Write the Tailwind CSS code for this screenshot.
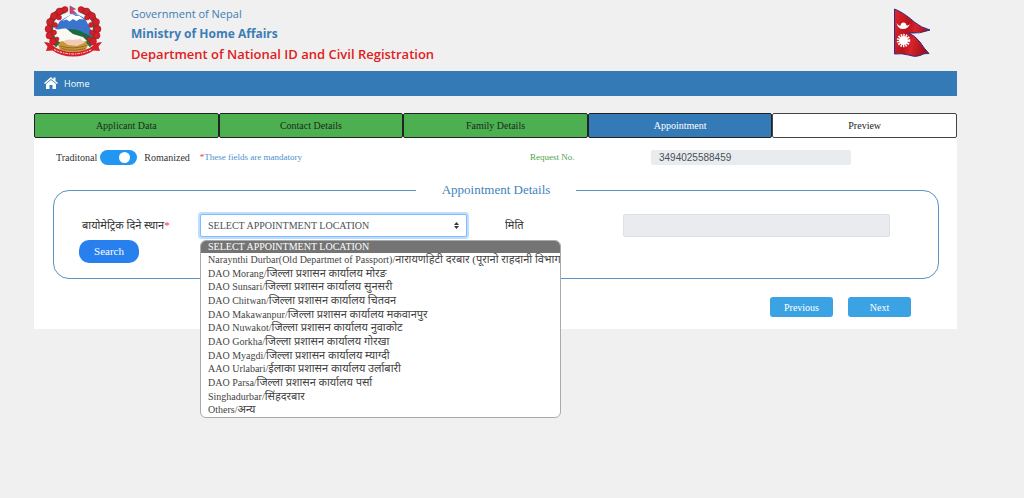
<!DOCTYPE html>
<html lang="en">
<head>
  <meta charset="UTF-8" />
  <title>Appointment Details</title>
  <meta name="viewport" content="width=device-width, initial-scale=1.0" />
  <script src="https://cdn.jsdelivr.net/npm/@tailwindcss/browser@4"></script>
</head>
<body class="bg-[#f0f0f0] text-[#333] min-h-screen font-['Liberation_Serif','Noto_Sans_Devanagari','Noto_Sans',serif] text-[10px]">

  <div class="ml-[34px] mr-[67px]">
    <header class="flex items-start pt-1 h-[71px]">
      <svg class="w-[60px] h-[54px] ml-[9px] shrink-0" viewBox="0 0 120 108" role="img" aria-label="Emblem of Nepal">
        <ellipse cx="60" cy="54" rx="39" ry="38" fill="#f4f6f8" />
        <path d="M24 50 34 34l10-6 14-8 12 1 14 8 12 23 2 14-24-4-18-8-18-2z" fill="#3a74cc" />
        <path d="m38 34 8-6 12-8 8 4 6-1 10 8-9-1-6 4-7-4-7 5-6-4z" fill="#fff" />
        <path d="M52 50q18 0 30 8l14 6q-2 10-10 16l-20-8-18-10z" fill="#1c6b3c" />
        <path d="M24 56q8-8 22-7l14 11 20 6 8 8-20 8-26-2q-14-6-18-24z" fill="#fbf9f3" />
        <path d="M28 77q17-5 32-1 16-3 32 0l-6 16q-25 8-52 0z" fill="#c9973a" />
        <path d="M40 75q9-6 19-3l16-2 9 7-16 7-18-2z" fill="#f1cbb6" />
        <path d="M34 84q26 8 53-1M37 89q23 7 47 0" fill="none" stroke="#946a27" stroke-width="2" />
        <path d="M44 12C8 20 6 62 30 82M76 12c36 8 38 50 14 70" fill="none" stroke="#2f6d38" stroke-width="12" />
        <g fill="#d31f2c" stroke="#a5141f" stroke-width="1">
          <circle cx="44" cy="11" r="6" /><circle cx="33" cy="15" r="7" /><circle cx="22" cy="24" r="7" />
          <circle cx="14" cy="36" r="7" /><circle cx="11" cy="50" r="7" /><circle cx="13" cy="63" r="7" />
          <circle cx="20" cy="75" r="7" /><circle cx="32" cy="27" r="5" /><circle cx="24" cy="42" r="5" />
          <circle cx="22" cy="57" r="5" /><circle cx="28" cy="70" r="4" />
          <circle cx="76" cy="11" r="6" /><circle cx="87" cy="15" r="7" /><circle cx="98" cy="24" r="7" />
          <circle cx="106" cy="36" r="7" /><circle cx="109" cy="50" r="7" /><circle cx="107" cy="63" r="7" />
          <circle cx="100" cy="75" r="7" /><circle cx="88" cy="27" r="5" /><circle cx="96" cy="42" r="5" />
          <circle cx="98" cy="57" r="5" /><circle cx="92" cy="70" r="4" />
        </g>
        <path d="M2 76q9 0 14 4 17 16 44 16t44-16q5-4 14-4l-7 9 3 9-13-1q-17 12-41 12T19 93L6 94l3-9z" fill="#d5202b" />
        <path d="M22 91q38 18 76 0" fill="none" stroke="#fff0dd" stroke-width="2" stroke-dasharray="5 2 3 2" />
        <path d="m54 4 11 6-6 2 8 7H54z" fill="#d94164" stroke="#563a85" stroke-width="1" />
      </svg>
      <div class="ml-7 font-['Open_Sans',sans-serif] text-[#3d7db5] leading-5">
        <p class="text-[11px]">Government of Nepal</p>
        <p class="text-[12px] font-bold">Ministry of Home Affairs</p>
        <p class="text-[13px] font-semibold text-[#e02020]">Department of National ID and Civil Registration</p>
      </div>
      <svg class="w-[40px] h-[54px] ml-auto mr-[25px] shrink-0" viewBox="0 0 80 108" role="img" aria-label="Flag of Nepal">
        <defs>
          <linearGradient id="cloth" x2="1" y2=".3">
            <stop offset="0" stop-color="#e0262c" /><stop offset=".45" stop-color="#b9141d" /><stop offset=".65" stop-color="#d8232b" /><stop offset="1" stop-color="#a3121c" />
          </linearGradient>
        </defs>
        <path d="M5 10C24 18 34 27 46 37q12 10 30 15-20 8-43 6 13 5 23 18 8 13 18 23-11-1-18 4-10 4-23-1-14-4-28-2z" fill="url(#cloth)" stroke="#352c80" stroke-width="2" stroke-linejoin="round" />
        <path d="M9 38q5 7 8 5 1-6 6-6t6 6q3 1 7-3-4 10-14 10T9 38z" fill="#fff" />
        <circle cx="23" cy="73" r="9" fill="#fff" />
        <circle cx="23" cy="73" r="11" fill="none" stroke="#fff" stroke-width="5" stroke-dasharray="3 2" />
      </svg>
    </header>

    <nav class="flex items-center h-[25px] bg-[#337ab7] pl-[10px]">
      <a href="#" class="flex items-center gap-[6px] text-white text-[9px] font-['Open_Sans',sans-serif]">
        <svg class="w-[14px] h-[12px] -mt-[2px]" viewBox="0 0 28 24" fill="currentColor" aria-hidden="true">
          <path d="M14 0 0 12l2 2L14 4l12 10 2-2-5-4V1h-4v4z" />
          <path d="M14 6 4 14v10h7v-8h6v8h7V14z" />
        </svg>
        Home
      </a>
    </nav>

    <main class="mt-[17px] bg-white">
      <div class="grid grid-cols-5 h-[25px]">
        <button type="button" class="bg-[#4caf50] border border-[#222] rounded-xs text-[#1c2b1c]">Applicant Data</button>
        <button type="button" class="bg-[#4caf50] border border-[#222] rounded-xs text-[#1c2b1c]">Contact Details</button>
        <button type="button" class="bg-[#4caf50] border border-[#222] rounded-xs text-[#1c2b1c]">Family Details</button>
        <button type="button" class="bg-[#337ab7] border border-[#222] rounded-xs text-white">Appointment</button>
        <button type="button" class="bg-white border border-[#444] rounded-xs text-[#222]">Preview</button>
      </div>

      <form>
        <div class="flex items-center h-[39px] pl-[22px] pr-[106px]">
          <label for="script" class="mr-[3px]">Traditonal</label>
          <input id="script" type="checkbox" role="switch" checked class="appearance-none w-[37px] h-[15px] rounded-full bg-[#2196f3] before:block before:size-[11px] before:mt-[2px] before:ml-[19px] before:rounded-full before:bg-white" />
          <span class="ml-[7px]">Romanized</span>
          <p class="ml-[10px] text-[9px] text-[#4a90cf]"><span class="text-red-500">*</span>These fields are mandatory</p>
          <label for="request" class="ml-auto w-[46px] whitespace-nowrap text-[9px] text-[#4ca64c]">Request No.</label>
          <input id="request" type="text" readonly value="3494025588459" class="ml-[75px] w-[200px] h-[15px] px-2 rounded-xs bg-[#e9ecef] text-[#495057] font-['Liberation_Sans',sans-serif] text-[10px]" />
        </div>

        <fieldset class="ml-[19px] mr-[18px] h-[102px] border border-[#5a94c4] rounded-2xl">
          <legend class="mx-auto px-[26px] text-[13px] leading-[26px] text-[#3f83bb]">Appointment Details</legend>
          <div class="grid grid-cols-2 gap-x-[38px] mt-[11px] pl-7 pr-12">
            <div class="flex items-center">
              <label for="location" class="w-[118px] shrink-0 text-[11px]">बायोमेट्रिक दिने स्थान<span class="text-red-500">*</span></label>
              <div class="relative grow">
                <select id="location" class="block appearance-none w-full h-[23px] pl-[7px] border border-[#80bdff] rounded-xs bg-white text-[#495057] ring-2 ring-[#bfdeff]">
                  <option>SELECT APPOINTMENT LOCATION</option>
                </select>
                <svg class="absolute right-2 top-2 w-[5px] h-[7px] pointer-events-none" viewBox="0 0 10 14" fill="#343a40" aria-hidden="true"><path d="M5 0 0 6h10zM5 14 0 8h10z" /></svg>
                <ul role="listbox" aria-label="Appointment locations" class="absolute z-10 left-0 top-[26px] flex flex-col w-[361px] h-[178px] overflow-hidden whitespace-nowrap bg-white border border-[#aaa] rounded-md leading-[13px] text-[#444] [&>li]:pl-[7px] [&>li]:flex-1 [&>li]:min-h-0 [&_span]:text-[11px]">
                  <li role="option" aria-selected="true" class="max-h-3 leading-3 bg-[#747474] text-white">SELECT APPOINTMENT LOCATION</li>
                  <li role="option">Naraynthi Durbar(Old Departmet of Passport)/<span>नारायणहिटी दरबार (पूरानो राहदानी विभाग</span></li>
                  <li role="option">DAO Morang/<span>जिल्ला प्रशासन कार्यालय मोरङ</span></li>
                  <li role="option">DAO Sunsari/<span>जिल्ला प्रशासन कार्यालय सुनसरी</span></li>
                  <li role="option">DAO Chitwan/<span>जिल्ला प्रशासन कार्यालय चितवन</span></li>
                  <li role="option">DAO Makawanpur/<span>जिल्ला प्रशासन कार्यालय मकवानपुर</span></li>
                  <li role="option">DAO Nuwakot/<span>जिल्ला प्रशासन कार्यालय नुवाकोट</span></li>
                  <li role="option">DAO Gorkha/<span>जिल्ला प्रशासन कार्यालय गोरखा</span></li>
                  <li role="option">DAO Myagdi/<span>जिल्ला प्रशासन कार्यालय म्याग्दी</span></li>
                  <li role="option">AAO Urlabari/<span>ईलाका प्रशासन कार्यालय उर्लाबारी</span></li>
                  <li role="option">DAO Parsa/<span>जिल्ला प्रशासन कार्यालय पर्सा</span></li>
                  <li role="option">Singhadurbar/<span>सिंहदरबार</span></li>
                  <li role="option">Others/<span>अन्य</span></li>
                </ul>
              </div>
            </div>
            <div class="flex items-center">
              <label for="date" class="w-[118px] shrink-0 text-[11px]">मिति</label>
              <input id="date" type="text" readonly class="grow min-w-0 h-[23px] px-2 border border-[#dcdfe3] rounded-xs bg-[#e9ebee]" />
            </div>
          </div>
          <button type="button" class="ml-[25px] mt-[3px] w-[60px] h-[23px] rounded-[10px] bg-[#2780ee] text-white text-[11px]">Search</button>
        </fieldset>

        <div class="flex justify-end gap-[15px] pt-[18px] pb-3 pr-[46px]">
          <button type="button" class="w-[63px] h-5 rounded-[3px] bg-[#3ba3e4] text-white">Previous</button>
          <button type="button" class="w-[63px] h-5 rounded-[3px] bg-[#3ba3e4] text-white">Next</button>
        </div>
      </form>
    </main>
  </div>

</body>
</html>
